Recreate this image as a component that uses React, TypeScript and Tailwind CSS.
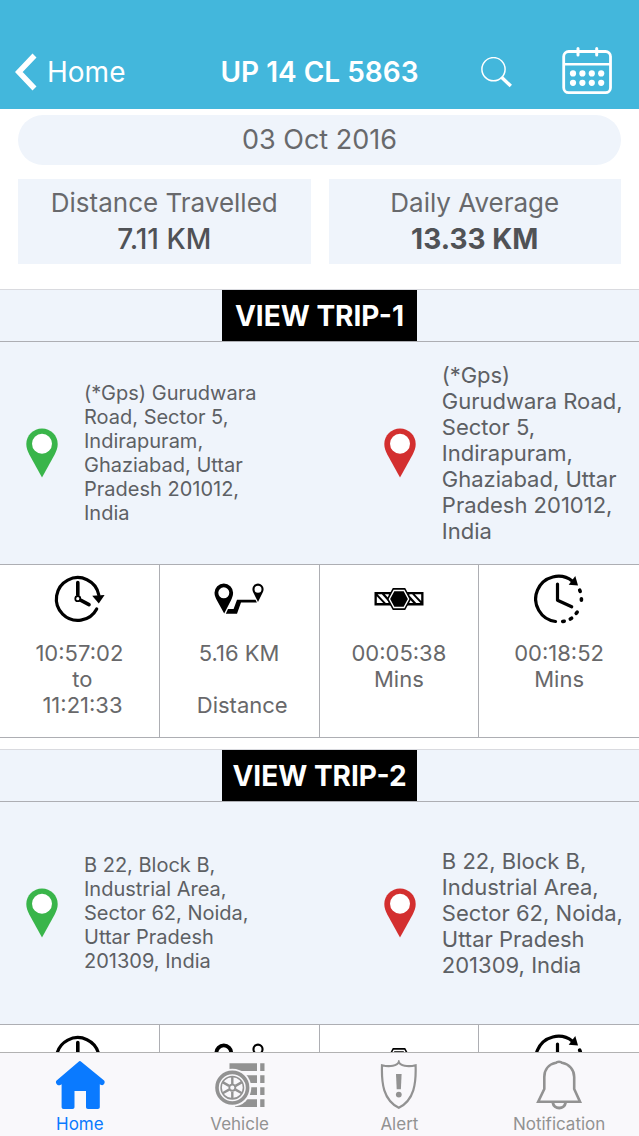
import type { ReactNode } from 'react'

interface Trip {
  id: number
  from: string
  to: string
  start?: string
  end?: string
  distance?: string
  idle?: string
  duration?: string
}

const trips: Trip[] = [
  {
    id: 1,
    from: '(*Gps) Gurudwara Road, Sector 5, Indirapuram, Ghaziabad, Uttar Pradesh 201012, India',
    to: '(*Gps) Gurudwara Road, Sector 5, Indirapuram, Ghaziabad, Uttar Pradesh 201012, India',
    start: '10:57:02',
    end: '11:21:33',
    distance: '5.16 KM',
    idle: '00:05:38',
    duration: '00:18:52',
  },
  {
    id: 2,
    from: 'B 22, Block B, Industrial Area, Sector 62, Noida, Uttar Pradesh 201309, India',
    to: 'B 22, Block B, Industrial Area, Sector 62, Noida, Uttar Pradesh 201309, India',
  },
]

// ── Icons ──────────────────────────────────────────────────────────────────────

function BackIcon() {
  return (
    <svg width="22" height="38" viewBox="0 0 22 38" fill="none" stroke="currentColor" strokeWidth="5.5">
      <path d="M19.5 2.5 3.8 19l15.7 16.5" />
    </svg>
  )
}

function SearchIcon() {
  return (
    <svg width="31" height="31" viewBox="0 0 31 31" fill="none" stroke="currentColor">
      <circle cx="12.5" cy="12.2" r="11.6" strokeWidth="1.5" />
      <path d="M20.8 20.5l9 8.6" strokeWidth="3.4" />
    </svg>
  )
}

function CalendarIcon() {
  return (
    <svg width="50" height="50" viewBox="0 0 50 50" fill="none" stroke="currentColor" strokeWidth="2.8">
      <rect x="1.7" y="4.5" width="46.8" height="41.2" rx="5" />
      <path d="M2 17.2h46" strokeWidth="2.4" />
      <path d="M16 1.5v6.5M34.7 1.5v6.5" strokeWidth="3" strokeLinecap="round" />
      <g fill="currentColor" stroke="none">
        {[11, 20.4, 29.8, 39.2].map((x) => (
          <g key={x}>
            <circle cx={x} cy="26.4" r="3.1" />
            <circle cx={x} cy="35.8" r="3.1" />
          </g>
        ))}
      </g>
    </svg>
  )
}

function PinIcon({ className }: { className: string }) {
  return (
    <svg width="32" height="50" viewBox="0 0 32 50" className={className}>
      <path
        d="M16 0.5C7.4.5.3 7.400.3 16c0 4 1.400 7.400 3 10.500L16 49.500l12.700-23c1.600-3.100 3-6.500 3-10.500C31.700 7.400 24.600.5 16 .5z"
        fill="currentColor"
      />
      <circle cx="16" cy="15.800" r="10" fill="#fff" />
    </svg>
  )
}

function ClockArrowIcon() {
  return (
    <svg width="50" height="50" viewBox="0 0 50 50" fill="none" stroke="#000" strokeWidth="3.2" overflow="visible">
      <path d="M44.800 21A21.400 21.400 0 1 0 42.700 35" strokeLinecap="round" />
      <path d="M38.200 21.800l12.400-.9-5.800 8.600z" fill="#000" stroke="none" />
      <path d="M23.800 8.500v12.500M27 26.400l8 4.200" strokeWidth="3.600" strokeLinecap="round" />
      <circle cx="23.800" cy="24.700" r="2.500" strokeWidth="1.800" />
    </svg>
  )
}

function RouteIcon() {
  return (
    <svg width="50" height="50" viewBox="0 0 50 50" fill="#000">
      <path
        fillRule="evenodd"
        d="M9.800 9.500A9.300 9.300 0 0 0 .5 18.800c0 3 1.300 5.400 2.500 7.700l7.200 13 6.700-13c1.100-2.300 2.200-4.700 2.200-7.700a9.300 9.300 0 0 0-9.300-9.300zm0 3.800a5.500 5.500 0 1 1 0 11 5.500 5.500 0 0 1 0-11z"
      />
      <path
        fillRule="evenodd"
        d="M44 9.500a5.600 5.600 0 0 0-5.600 5.600c0 1.800.7 3.100 1.400 4.500l4.200 8.300 4.200-8.300c.7-1.400 1.400-2.700 1.400-4.500A5.600 5.600 0 0 0 44 9.500zm0 2.200a3.500 3.500 0 1 1 0 7 3.500 3.500 0 0 1 0-7z"
      />
      <path d="M11.800 39.700l2.200-4.700h5.600l3.400-9.200h18.500l1.400 2.700H27l-4 11.200z" />
    </svg>
  )
}

function BeltIcon() {
  return (
    <svg width="50" height="50" viewBox="0 0 50 50">
      <path d="M.5 18h49v13.500H.5z" />
      <g fill="#fff">
        <path d="M2.800 22.300l6.400 6.700H2.800z" />
        <path d="M3.600 20.300h4.200l6.800 7.400V29h-2.800z" />
        <path d="M10.800 20.300h4v4.200z" />
        <path d="M47.200 27l-6.400-6.700h6.400z" />
        <path d="M46.400 29h-4.200l-6.800-7.400v-1.300h2.800z" />
        <path d="M39.200 29h-4v-4.200z" />
      </g>
      <path d="M18.800 14h12.400l6 11-6 11H18.800l-6-11z" />
      <path d="M20 16.500h10l4.600 8.500-4.600 8.500H20L15.400 25z" fill="none" stroke="#fff" strokeWidth="1.400" />
    </svg>
  )
}

function ClockDottedIcon() {
  return (
    <svg width="50" height="50" viewBox="0 0 50 50" fill="none" stroke="#000" strokeWidth="3.2" strokeLinecap="round">
      <path d="M21.500 47.500A22.700 22.700 0 1 1 38.500 7.200" />
      <path d="M41.300 2l2.700 9.500-9.300-.8z" fill="#000" stroke="none" />
      <path d="M23.500 10v16.200l14.200 6.600" strokeLinejoin="round" />
      <path d="M45.700 16.200l.5 1.200M47.400 24.700v1.600M43.200 38.200l-1 1.200M37.600 44.200l-1.300.8M30.200 47.200l-1.500.3" strokeWidth="3.600" />
    </svg>
  )
}

function HomeIcon() {
  return (
    <svg width="50" height="50" viewBox="0 0 50 50" fill="currentColor">
      <path d="M23.600 1.800a1.800 1.800 0 0 1 2.600 0l22.600 18.400c1.200 1 1 2.400.4 3.600-.7 1.400-2.200 1.700-3.600.9l-.8-.5V47c0 1.300-.7 2-2 2H33c-1.300 0-2-.7-2-2V31H19.500v16c0 1.300-.7 2-2 2H8.600c-1.300 0-2-.7-2-2V24.200l-1.200.7c-1.500.8-3 .4-3.800-.9-.9-1.400-1-2.700.3-3.800z" />
    </svg>
  )
}

function VehicleIcon() {
  return (
    <svg width="50" height="50" viewBox="0 0 50 50" fill="none" stroke="currentColor">
      <g fill="currentColor" stroke="none">
        <path d="M14.500 3.300H42V11H14.500zM24 15.300h18V23H24zM24 27.300h18V35H24zM20 39.300h22V47H20z" />
        <path d="M45.200 3.300h4.300V11h-4.300zM45.200 15.300h4.300V23h-4.300zM45.200 27.300h4.300V35h-4.300zM45.200 39.300h4.300V47h-4.300z" />
      </g>
      <circle cx="17.300" cy="27.700" r="19" fill="#f9f8fb" stroke="none" />
      <circle cx="17.300" cy="27.700" r="15.300" strokeWidth="3.600" />
      <circle cx="17.300" cy="27.700" r="11.200" strokeWidth="1.600" />
      <path
        d="M17.300 24v-7.500M17.300 31.400v7.500M14.100 25.900l-6.500-3.800M20.500 29.600l6.500 3.700M20.500 25.900l6.500-3.800M14.100 29.600l-6.500 3.700"
        strokeWidth="2.400"
      />
      <circle cx="17.300" cy="27.700" r="3" strokeWidth="1.800" />
    </svg>
  )
}

function AlertIcon() {
  return (
    <svg width="50" height="50" viewBox="0 0 50 50" fill="none" stroke="currentColor" strokeWidth="2.200">
      <path d="M24.800 2C23.500 5.600 16 7.300 8 5.300c-.6 18 1.200 34.500 16.800 42.500C40.400 39.800 42.200 23.300 41.600 5.300 33.600 7.300 26 5.600 24.800 2z" />
      <path d="M22 14h5.600l-.7 15.300h-4.200z" fill="currentColor" stroke="none" />
      <circle cx="24.800" cy="34.600" r="2.900" fill="currentColor" stroke="none" />
    </svg>
  )
}

function BellIcon() {
  return (
    <svg width="50" height="50" viewBox="0 0 50 50" fill="none" stroke="currentColor" strokeWidth="2.600">
      <path d="M22 2.800c1-1.400 5-1.400 6 0 7.500 1.400 12.200 7 12.200 14.200V29L46 41.700H4.200L10.300 29V17C10.300 9.800 14.500 4.200 22 2.800z" />
      <path d="M18.800 42.500c1 7.300 11.800 7.300 12.800 0" strokeWidth="2.800" />
    </svg>
  )
}

// ── Pieces ─────────────────────────────────────────────────────────────────────

function StatCell({ icon, children }: { icon: ReactNode; children: ReactNode }) {
  return (
    <div className="flex flex-col items-center pt-[9px] text-center text-[22px] leading-[26px] text-[#68686a]">
      {icon}
      <div className="mt-4">{children}</div>
    </div>
  )
}

function TripCard({ trip }: { trip: Trip }) {
  return (
    <section className="mb-[11px] border-t border-b border-t-[#d9dadf] border-b-[#adaeb3]">
      <div className="flex justify-center border-b border-[#adaeb3] bg-[#eff4fb]">
        <button type="button" className="h-[51px] w-[195px] bg-black text-[28px] font-bold text-white">
          VIEW TRIP-{trip.id}
        </button>
      </div>

      {/* Addresses */}
      <div className="grid h-[222px] grid-cols-[56fr_44fr] items-center bg-[#eff4fb] text-[#5d6064]">
        <div className="flex items-center gap-[26px] pl-[26px]">
          <PinIcon className="shrink-0 text-[#39b54a]" />
          <p className="w-[190px] text-[20px] leading-[24px]">{trip.from}</p>
        </div>
        <div className="flex items-center gap-[26px] pl-[26px]">
          <PinIcon className="shrink-0 text-[#d32f2f]" />
          <p className="min-w-0 flex-1 pr-3 text-[22px] leading-[26px]">{trip.to}</p>
        </div>
      </div>

      {/* Figures */}
      <div className="grid h-[173px] grid-cols-4 divide-x divide-[#adaeb3] border-t border-[#adaeb3] bg-white">
        <StatCell icon={<ClockArrowIcon />}>
          {trip.start && (
            <>
              <p>{trip.start}</p>
              <p>&nbsp;to</p>
              <p>&nbsp;{trip.end}</p>
            </>
          )}
        </StatCell>
        <StatCell icon={<RouteIcon />}>
          {trip.distance && (
            <>
              <p>{trip.distance}</p>
              <p className="mt-[26px]">&nbsp;Distance</p>
            </>
          )}
        </StatCell>
        <StatCell icon={<BeltIcon />}>
          {trip.idle && (
            <>
              <p>{trip.idle}</p>
              <p>Mins</p>
            </>
          )}
        </StatCell>
        <StatCell icon={<ClockDottedIcon />}>
          {trip.duration && (
            <>
              <p>{trip.duration}</p>
              <p>Mins</p>
            </>
          )}
        </StatCell>
      </div>
    </section>
  )
}

const tabs = [
  { label: 'Home', icon: <HomeIcon />, active: true },
  { label: 'Vehicle', icon: <VehicleIcon />, active: false },
  { label: 'Alert', icon: <AlertIcon />, active: false },
  { label: 'Notification', icon: <BellIcon />, active: false },
]

export default function App() {
  return (
    <div className="flex h-screen flex-col bg-white font-['Inter',sans-serif]">
      <header className="grid h-[109px] shrink-0 grid-cols-[1fr_auto_1fr] items-center bg-[#43b7dc] pt-[35px] text-white">
        <button type="button" className="flex items-center gap-[10px] pl-[15px] text-[28px]">
          <BackIcon />
          Home
        </button>
        <h1 className="text-[28px] font-semibold">UP 14 CL 5863</h1>
        <div className="flex items-center justify-end gap-[50px] pr-[27px]">
          <button type="button" aria-label="Search">
            <SearchIcon />
          </button>
          <button type="button" aria-label="Calendar">
            <CalendarIcon />
          </button>
        </div>
      </header>

      <main className="min-h-0 flex-1 overflow-hidden">
        {/* Day summary */}
        <div className="px-[18px] pt-[6px] pb-[25px] text-center text-[#68696c]">
          <p className="rounded-full bg-[#eff4fb] text-[27px] leading-[50px]">03 Oct 2016</p>
          <div className="mt-[14px] grid grid-cols-2 gap-[18px]">
            <div className="bg-[#eff4fb] pt-[5px] pb-[6px] text-[26px] leading-[37px]">
              <p>Distance Travelled</p>
              <p className="text-[28px] font-medium text-[#505256]">7.11 KM</p>
            </div>
            <div className="bg-[#eff4fb] pt-[5px] pb-[6px] text-[26px] leading-[37px]">
              <p>Daily Average</p>
              <p className="text-[28px] font-bold text-[#505256]">13.33 KM</p>
            </div>
          </div>
        </div>

        {trips.map((trip) => (
          <TripCard key={trip.id} trip={trip} />
        ))}
      </main>

      <nav className="grid h-[84px] shrink-0 grid-cols-4 border-t border-[#b2b2b2] bg-[#f9f8fb] text-[17px] leading-[20px]">
        {tabs.map((tab) => (
          <a
            key={tab.label}
            href="#"
            className={`flex flex-col items-center gap-1 pt-[7px] ${tab.active ? 'text-[#0a7aff]' : 'text-[#929292]'}`}
          >
            {tab.icon}
            {tab.label}
          </a>
        ))}
      </nav>
    </div>
  )
}
